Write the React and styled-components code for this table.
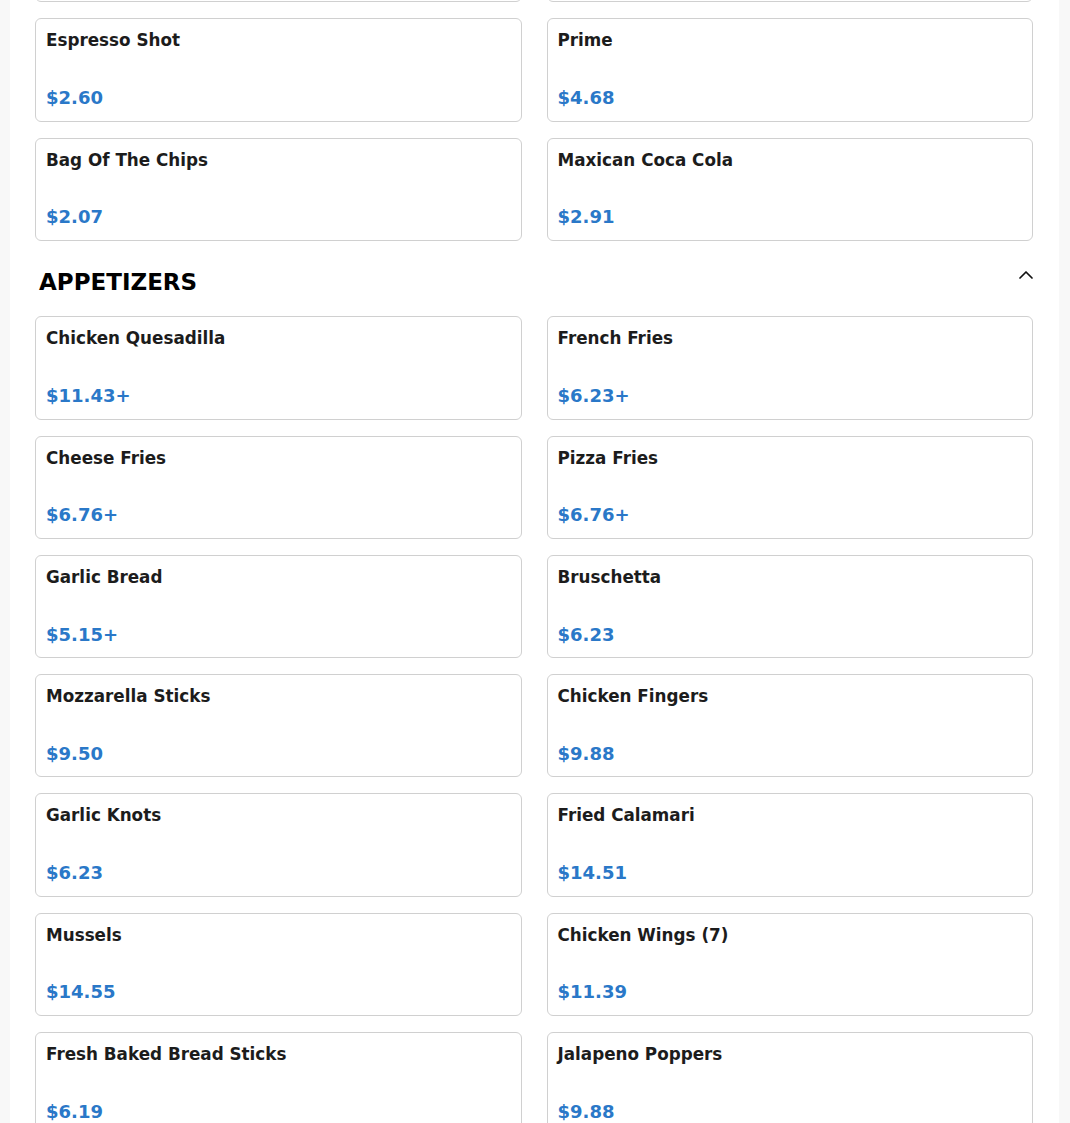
import React from "react";
import styled, { createGlobalStyle } from "styled-components";
import { ChevronUp } from "lucide-react";

const GlobalStyle = createGlobalStyle`
  html, body {
    margin: 0;
    padding: 0;
    background: #f8f8f8;
    font-family: "DejaVu Sans", "Liberation Sans", sans-serif;
  }
  * { box-sizing: border-box; }
`;

const Page = styled.div`
  width: 1049px;
  margin: 0 0 0 10px;
  background: #ffffff;
  padding: 0 26px 40px 25px;
  overflow: hidden;
  height: 1123px;
`;

// list is scrolled so the previous row only shows its bottom edge
const Scroller = styled.div`
  margin-top: -101px;
`;

const Section = styled.section`
  display: flex;
  flex-direction: column;
`;

const SectionHeader = styled.div`
  display: flex;
  align-items: flex-start;
  justify-content: space-between;
  padding: 24px 0 17.4px 4px;
  color: #000;
`;

const SectionTitle = styled.h2`
  margin: 0;
  font-size: 23px;
  font-weight: bold;
  line-height: 34px;
`;

const Toggle = styled.span`
  display: flex;
  margin: -2px -5px 0 0;
  color: #111;
`;

const Grid = styled.div`
  display: grid;
  grid-template-columns: repeat(2, 1fr);
  column-gap: 25px;
  row-gap: 16px;
`;

const Card = styled.div`
  border: 1px solid #d0d0d0;
  border-radius: 6px;
  padding: 11px 10px 12px 10px;
  height: 103.3px;
  display: flex;
  flex-direction: column;
  justify-content: space-between;
  background: #fff;
`;

const ItemName = styled.h3`
  margin: 0;
  font-size: 16.8px;
  font-weight: bold;
  color: #1c1c1c;
  line-height: 1.2;
`;

const ItemPrice = styled.span`
  font-size: 18px;
  font-weight: bold;
  color: #2a78c8;
  line-height: 1.2;
`;

const sections = [
  {
    title: null,
    items: [
      { name: "Iced Tea", price: "$2.60" },
      { name: "Soda", price: "$2.60" },
      { name: "Espresso Shot", price: "$2.60" },
      { name: "Prime", price: "$4.68" },
      { name: "Bag Of The Chips", price: "$2.07" },
      { name: "Maxican Coca Cola", price: "$2.91" },
    ],
  },
  {
    title: "APPETIZERS",
    items: [
      { name: "Chicken Quesadilla", price: "$11.43+" },
      { name: "French Fries", price: "$6.23+" },
      { name: "Cheese Fries", price: "$6.76+" },
      { name: "Pizza Fries", price: "$6.76+" },
      { name: "Garlic Bread", price: "$5.15+" },
      { name: "Bruschetta", price: "$6.23" },
      { name: "Mozzarella Sticks", price: "$9.50" },
      { name: "Chicken Fingers", price: "$9.88" },
      { name: "Garlic Knots", price: "$6.23" },
      { name: "Fried Calamari", price: "$14.51" },
      { name: "Mussels", price: "$14.55" },
      { name: "Chicken Wings (7)", price: "$11.39" },
      { name: "Fresh Baked Bread Sticks", price: "$6.19" },
      { name: "Jalapeno Poppers", price: "$9.88" },
    ],
  },
];

const App = () => (
  <>
    <GlobalStyle />
    <Page>
      <Scroller>
        {sections.map((section, i) => (
          <Section key={i}>
            {section.title && (
              <SectionHeader>
                <SectionTitle>{section.title}</SectionTitle>
                <Toggle>
                  <ChevronUp size={24} strokeWidth={1.75} />
                </Toggle>
              </SectionHeader>
            )}
            <Grid>
              {section.items.map((item) => (
                <Card key={item.name}>
                  <ItemName>{item.name}</ItemName>
                  <ItemPrice>{item.price}</ItemPrice>
                </Card>
              ))}
            </Grid>
          </Section>
        ))}
      </Scroller>
    </Page>
  </>
);

export default App;
